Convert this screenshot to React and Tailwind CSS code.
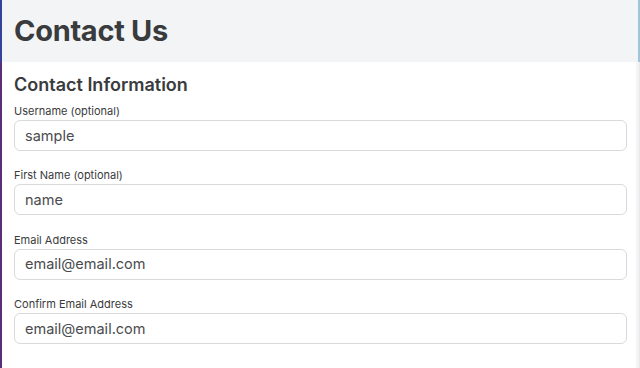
import React from "react";

const fields = [
  { label: "Username (optional)", value: "sample" },
  { label: "First Name (optional)", value: "name" },
  { label: "Email Address", value: "email@email.com" },
  { label: "Confirm Email Address", value: "email@email.com" },
];

export default function App() {
  return (
    <div className="w-[640px] h-[368px] overflow-hidden bg-white text-[#393b3d] font-['Inter',sans-serif]">
      {/* Page header */}
      <div className="h-[62px] flex items-center bg-[#f2f4f5] border-l-2 border-[#34429c] border-r-2 border-r-[#9fc5d7] pl-3">
        <h1 className="text-[29px] font-bold tracking-[-0.3px] text-[#393b3d]">Contact Us</h1>
      </div>

      {/* Form body */}
      <div className="flex h-[306px]">
        <div className="flex-1 border-l-2 border-[#5b2c78] pl-3 pr-[9px] pt-[12px]">
          <h2 className="text-[18px] font-semibold leading-[22px] text-[#393b3d]">Contact Information</h2>
          <div className="mt-[8px] flex flex-col gap-[17.4px]">
            {fields.map((f) => (
              <div key={f.label}>
                <label className="block text-[11px] leading-[14px] mb-[2px] text-[#393b3d]">{f.label}</label>
                <div className="h-[31px] flex items-center rounded-md border border-[#d8dadc] bg-white px-[10px] text-[14.5px] text-[#4a4c4e]">
                  {f.value}
                </div>
              </div>
            ))}
          </div>
        </div>
        <div className="w-[4px] bg-[#f2f4f5] border-r border-[#e6e8ea]" />
      </div>
    </div>
  );
}
